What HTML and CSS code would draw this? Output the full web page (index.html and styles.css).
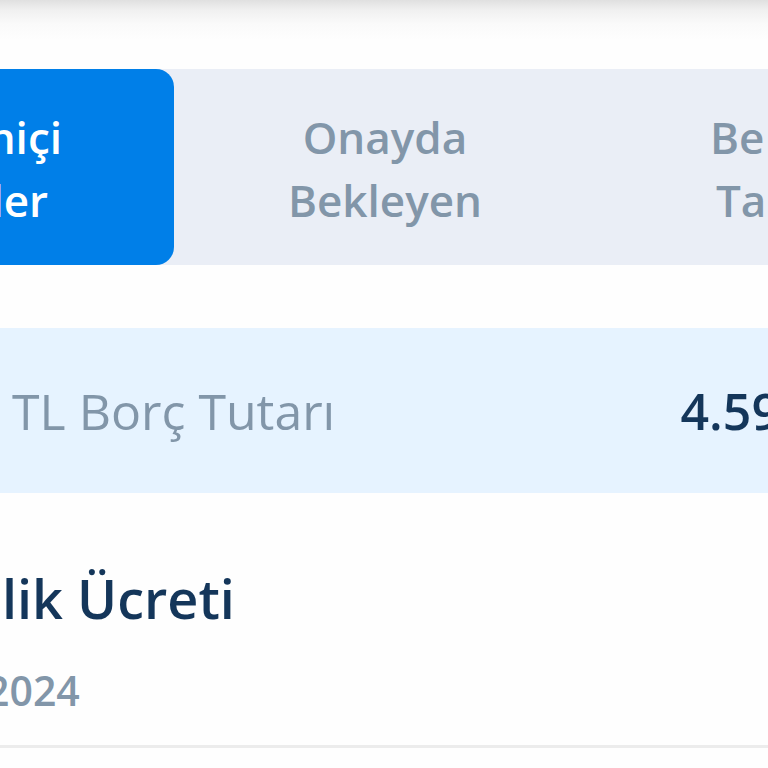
FILE: index.html
```
<!DOCTYPE html>
<html lang="tr">

<head>
    <meta charset="UTF-8" />
    <meta name="viewport" content="width=device-width, initial-scale=1" />
    <title>TL Borç Tutarı</title>
    <link rel="stylesheet" href="styles.css">
</head>

<body>

    <div class="header-shadow"></div>

    <!-- Sekmeler -->
    <nav class="tabs">
        <button type="button" class="tab tab-first active"><span>niçi</span><span>ler</span></button>
        <button type="button" class="tab"><span>Onayda</span><span>Bekleyen</span></button>
        <button type="button" class="tab tab-last"><span>Be</span><span>Ta</span></button>
    </nav>

    <main>
        <!-- Toplam borç -->
        <section class="debt">
            <span class="debt-label">TL Borç Tutarı</span>
            <strong class="debt-amount">4.59</strong>
        </section>

        <!-- Hareketler -->
        <article class="transaction">
            <h2>lik Ücreti</h2>
            <time datetime="2024">2024</time>
        </article>
    </main>

</body>

</html>
```

FILE: styles.css
```
* {
    box-sizing: border-box;
}

body {
    margin: 0;
    background-color: #fefefe;
    color: #14365a;
    font-family: "Open Sans", sans-serif;
    overflow-x: hidden;
}

.header-shadow {
    height: 40px;
    margin-bottom: 29px;
    background: linear-gradient(#e0e0e0, #f0f0f0 25%, #fafafa 60%, #fefefe);
}

/* Sekmeler */
.tabs {
    display: grid;
    grid-template-columns: 174fr 422fr 172fr;
    margin-bottom: 63px;
    background-color: #eaeef6;
}

.tab {
    min-width: 0;
    padding: 37px 0 33px;
    border: none;
    background: none;
    color: #8296a9;
    font-family: inherit;
    font-size: 44px;
    font-weight: 600;
    line-height: 63px;
    white-space: nowrap;
    overflow: hidden;
    cursor: pointer;
}

.tab span {
    display: block;
}

.tab.active {
    border-radius: 0 18px 18px 0;
    background-color: #007fe8;
    color: #fff;
}

.tab-first {
    display: flex;
    flex-direction: column;
    align-items: flex-end;
    padding-right: 112px;
}

.tab-first span + span {
    padding-right: 14px;
}

.tab-last {
    padding-left: 114px;
    text-align: left;
}

.tab-last span + span {
    padding-left: 6px;
}

/* Toplam borç */
.debt {
    display: flex;
    justify-content: space-between;
    padding: 49px 0 47px 12px;
    background-color: #e6f3ff;
    font-size: 50px;
    line-height: 69px;
    white-space: nowrap;
    overflow: hidden;
}

.debt-label {
    color: #8296a9;
}

.debt-amount {
    margin-right: -12px;
    font-weight: 600;
}

/* Hareketler */
.transaction {
    padding: 67px 0 25px;
    border-bottom: 3px solid #ececec;
}

.transaction h2 {
    margin: 0 0 24px 2px;
    font-size: 54px;
    font-weight: 600;
    line-height: 76px;
}

.transaction time {
    display: block;
    margin-left: -14px;
    color: #8296a9;
    font-size: 41px;
    font-weight: 600;
    line-height: 60px;
}
```
